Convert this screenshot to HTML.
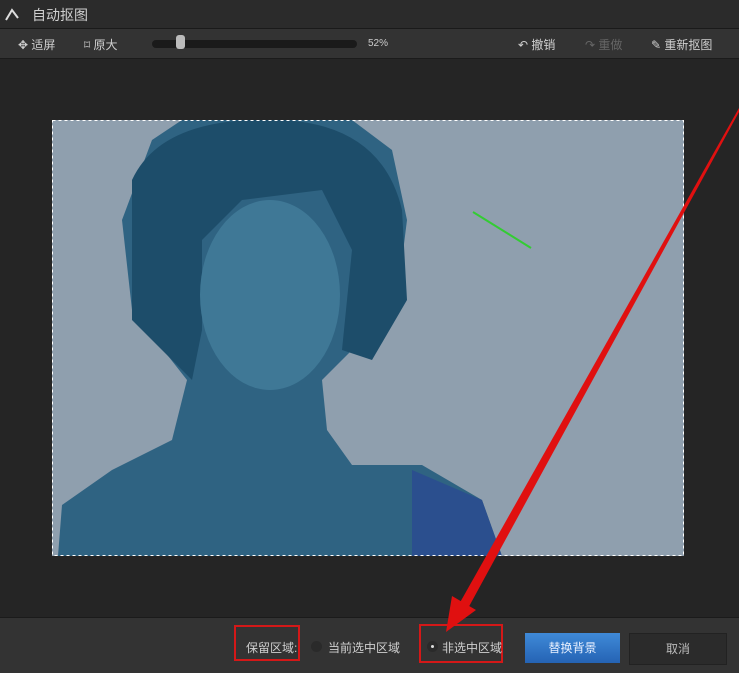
<!DOCTYPE html>
<html><head><meta charset="utf-8"><style>
body{margin:0;width:739px;height:672px;overflow:hidden;background:#252525;font-family:"Liberation Sans","Noto Sans CJK SC",sans-serif;position:relative}
.a{position:absolute}
.t{color:#cfcfcf;font-size:12px}
</style></head><body>
<div class="a" style="left:0;top:0;width:739px;height:28px;background:#2b2b2b;border-bottom:1px solid #1a1a1a"></div>
<svg class="a" style="left:4px;top:6px" width="16" height="16"><path d="M2 14 L8 4 L14 12" stroke="#ddd" stroke-width="2" fill="none"/></svg>
<div class="a" style="left:32px;top:5px;color:#d0d0d0;font-size:14px">自动抠图</div>
<div class="a" style="left:0;top:29px;width:739px;height:29px;background:#333;border-bottom:1px solid #1b1b1b"></div>
<div class="a t" style="left:18px;top:36px">✥ 适屏</div>
<div class="a t" style="left:84px;top:36px">⌑ 原大</div>
<div class="a" style="left:152px;top:40px;width:205px;height:8px;border-radius:4px;background:#1a1a1a"></div>
<div class="a" style="left:176px;top:35px;width:9px;height:14px;border-radius:3px;background:#bbb"></div>
<div class="a" style="left:368px;top:38px;color:#ccc;font-size:10px">52%</div>
<div class="a t" style="left:518px;top:36px">↶ 撤销</div>
<div class="a" style="left:585px;top:36px;color:#666;font-size:12px">↷ 重做</div>
<div class="a t" style="left:651px;top:36px">✎ 重新抠图</div>
<svg class="a" style="left:52px;top:120px" width="632" height="436">
<rect width="632" height="436" fill="#8f9fae"/>
<path d="M6 436 L10 385 L60 350 L120 320 L135 260 L80 190 L70 100 L100 20 L130 0 L300 0 L340 30 L355 100 L345 180 L300 230 L270 260 L275 310 L300 345 L370 345 L430 380 L450 436 Z" fill="#2f6382"/>
<path d="M80 60 Q110 -5 230 0 Q330 5 350 90 L355 180 L320 240 L290 230 L300 130 L270 70 L190 80 L150 120 L150 210 L140 260 L80 200 Z" fill="#1d4d6a"/>
<ellipse cx="218" cy="175" rx="70" ry="95" fill="#3f7896"/>
<path d="M360 350 L430 380 L450 436 L360 436 Z" fill="#2b4f8e"/>
<rect x="0.5" y="0.5" width="631" height="435" fill="none" stroke="#fff" stroke-dasharray="3 3"/>
<line x1="421" y1="92" x2="479" y2="128" stroke="#3c3" stroke-width="2"/>
</svg>
<div class="a" style="left:0;top:617px;width:739px;height:55px;background:#333;border-top:1px solid #1b1b1b"></div>
<div class="a" style="left:234px;top:625px;width:66px;height:36px;border:2px solid #d41818;box-sizing:border-box"></div>
<div class="a t" style="left:246px;top:639px">保留区域:</div>
<div class="a" style="left:311px;top:641px;width:11px;height:11px;border-radius:50%;background:#2a2a2a"></div>
<div class="a t" style="left:328px;top:639px">当前选中区域</div>
<div class="a" style="left:419px;top:624px;width:84px;height:39px;border:2px solid #d41818;box-sizing:border-box"></div>
<div class="a" style="left:427px;top:641px;width:11px;height:11px;border-radius:50%;background:#2a2a2a"><div style="margin:4px;width:3px;height:3px;background:#ddd;border-radius:50%"></div></div>
<div class="a t" style="left:442px;top:639px">非选中区域</div>
<div class="a" style="left:525px;top:633px;width:95px;height:30px;background:linear-gradient(#3f8ad8,#2563b4);color:#e8f0ff;font-size:12px;text-align:center;line-height:30px">替换背景</div>
<div class="a" style="left:629px;top:633px;width:96px;height:30px;background:#2b2b2b;border:1px solid #222;color:#bbb;font-size:12px;text-align:center;line-height:30px">取消</div>
<svg class="a" style="left:0;top:0" width="739" height="672"><path d="M739 108 L739 112 L466 612 L458 606 Z" fill="#e01010"/><path d="M446 632 L452 596 L476 610 Z" fill="#e01010"/></svg>
</body></html>
